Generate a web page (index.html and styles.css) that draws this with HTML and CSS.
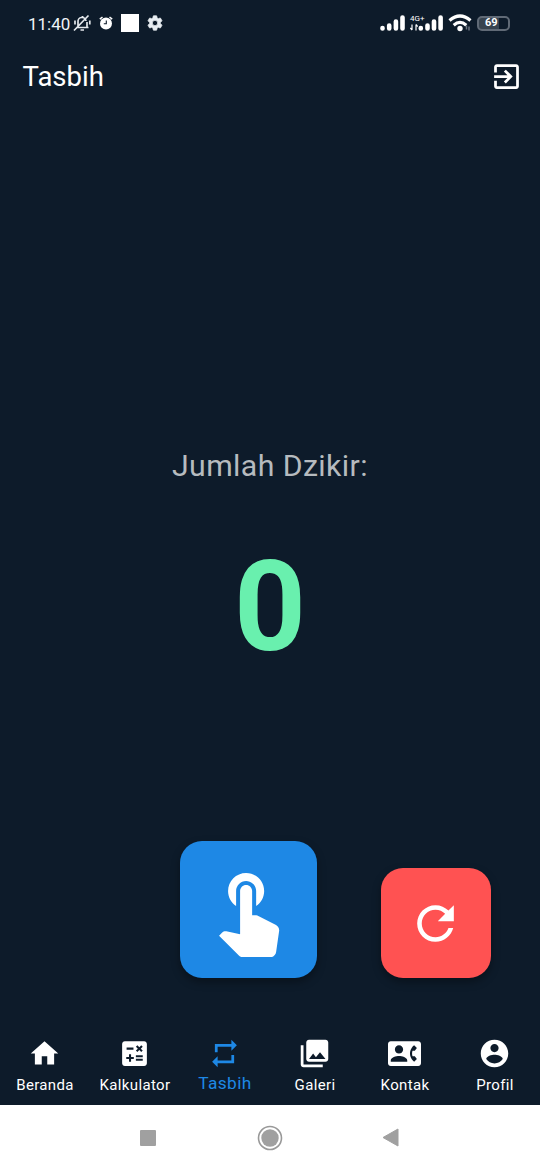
FILE: index.html
```html
<!DOCTYPE html>
<html lang="id">
<head>
<meta charset="utf-8">
<title>Tasbih</title>
<link rel="stylesheet" href="styles.css">
</head>
<body>
<div class="phone">
  <div class="status">
    <span class="clock">11:40</span>
    <svg class="mute" width="18" height="18" viewBox="0 0 18 18" fill="none" stroke="#e4e8ec" stroke-width="1.700"><path d="M3.500 13.500h12M5 13V8a4 4 0 0 1 8-1M14 8v5M7.500 16h3.500M9.500 2v2M1 16.500l14.500-15M2 6.500v4M16.800 6.500v4"/></svg>
    <svg class="alarm" width="14" height="14" viewBox="0 0 14 14"><circle cx="7" cy="7.5" r="6" fill="#fff"/><path d="M.8 3.200 3.500 1M13.200 3.200 10.500 1" stroke="#fff" stroke-width="1.500"/><path d="M7.300 4.500v3.300H4.800" fill="none" stroke="#0d1b2a" stroke-width="1.100"/></svg>
    <span class="block"></span>
    <svg class="gear" width="18" height="18" viewBox="0 0 24 24" fill="#e8edf2" stroke="#e8edf2"><path fill-rule="evenodd" d="M19.14 12.94c.04-.3.06-.61.06-.94 0-.32-.02-.64-.07-.94l2.03-1.58c.18-.14.23-.41.12-.61l-1.92-3.32c-.12-.22-.37-.29-.59-.22l-2.39.96c-.5-.38-1.03-.7-1.62-.94l-.36-2.54c-.04-.24-.24-.41-.48-.41h-3.84c-.24 0-.43.17-.47.41l-.36 2.54c-.59.24-1.13.57-1.62.94l-2.39-.96c-.22-.08-.47 0-.59.22L2.74 8.87c-.12.21-.08.47.12.61l2.03 1.58c-.05.3-.09.63-.09.94s.02.64.07.94l-2.03 1.58c-.18.14-.23.41-.12.61l1.92 3.32c.12.22.37.29.59.22l2.39-.96c.5.38 1.03.7 1.62.94l.36 2.54c.05.24.24.41.48.41h3.84c.24 0 .44-.17.47-.41l.36-2.54c.59-.24 1.13-.56 1.62-.94l2.39.96c.22.08.47 0 .59-.22l1.92-3.32c.12-.22.07-.47-.12-.61l-2.01-1.58zM12 15.6A3.6 3.6 0 1 1 12 8.4a3.6 3.6 0 0 1 0 7.200z"/></svg>
    <span class="spacer"></span>
    <svg class="signal" width="25" height="16" viewBox="0 0 25 16" stroke="#fff" stroke-width="4.600" stroke-linecap="round"><path d="M2.500 13v.4M9.200 10.500v3M15.900 6.500v7M22.500 2.500v11"/></svg>
    <div class="mobile">
      <span class="network">4G+</span>
      <svg class="traffic" width="8" height="7" viewBox="0 0 8 7" fill="none" stroke="#fff" stroke-width="1.200"><path d="M2 .5v5.500M.3 4 2 6M6 6.500v-6M6 .5 7.700 2.500"/></svg>
      <svg class="signal2" width="25" height="16" viewBox="0 0 25 16" stroke="#fff" stroke-width="4.600" stroke-linecap="round"><path d="M2.800 13v.4M9.500 10.500v3M16 6.500v7M22.600 2.500v11"/></svg>
    </div>
    <svg class="wifi" width="24" height="18" viewBox="0 0 24 18" fill="none" stroke="#fff" stroke-width="3.200"><path d="M1.500 6.500q10.500-9 21 0M5.700 11.200q6.300-5.500 12.600 0"/><circle cx="12" cy="14.500" r="2.700" fill="#fff" stroke="none"/><path d="M18.500 15.500v-4M21 12.500v4" stroke="#6c7682" stroke-width="1.500"/></svg>
    <div class="battery"><span class="level">69</span></div>
  </div>

  <header class="appbar">
    <h1 class="title">Tasbih</h1>
    <svg class="icon" viewBox="0 0 24 24"><path d="M10.090 15.590 11.500 17l5-5-5-5-1.410 1.410L12.670 11H3v2h9.670l-2.580 2.590zM19 3H5c-1.110 0-2 .9-2 2v4h2V5h14v14H5v-4H3v4c0 1.100.89 2 2 2h14c1.100 0 2-.9 2-2V5c0-1.100-.9-2-2-2z"/></svg>
  </header>

  <main class="content">
    <p class="caption">Jumlah Dzikir:</p>
    <p class="count">0</p>
  </main>

  <div class="actions">
    <button class="fab fab-tap" aria-label="Hitung"><svg width="96.250" height="96.250" viewBox="0 0 24 24" fill="#fff"><path d="M9 11.240V7.500C9 6.120 10.120 5 11.500 5S14 6.120 14 7.500v3.740c1.210-.81 2-2.180 2-3.740C16 5.010 13.990 3 11.500 3S7 5.010 7 7.500c0 1.560.79 2.930 2 3.740zm9.840 4.630-4.540-2.260c-.17-.07-.35-.11-.54-.11H13v-6c0-.83-.67-1.500-1.500-1.500S10 6.670 10 7.500v10.740l-3.430-.72c-.08-.01-.15-.03-.24-.03-.31 0-.59.13-.79.33l-.79.8 4.940 4.940c.27.27.65.44 1.060.44h6.790c.75 0 1.330-.55 1.440-1.280l.75-5.270c.01-.07.02-.14.02-.2 0-.62-.38-1.160-.91-1.380z"/></svg></button>
    <button class="fab fab-reset" aria-label="Ulang"><svg width="55" height="55" viewBox="0 0 24 24" fill="#fff"><path d="M17.650 6.350C16.200 4.900 14.210 4 12 4c-4.420 0-7.990 3.580-7.990 8s3.570 8 7.990 8c3.730 0 6.840-2.550 7.730-6h-2.080c-.82 2.330-3.040 4-5.650 4-3.310 0-6-2.690-6-6s2.690-6 6-6c1.660 0 3.140.69 4.220 1.780L13 11h7V4l-2.350 2.350z"/></svg></button>
  </div>

  <nav class="tabs">
    <div class="tab"><svg class="icon" viewBox="0 0 24 24"><path d="M10 20v-6h4v6h5v-8h3L12 3 2 12h3v8z"/></svg><span>Beranda</span></div>
    <div class="tab"><svg class="icon" viewBox="0 0 24 24"><path d="M19 3H5c-1.100 0-2 .9-2 2v14c0 1.100.9 2 2 2h14c1.100 0 2-.9 2-2V5c0-1.100-.9-2-2-2zm-5.970 4.060L14.090 6l1.410 1.410L16.910 6l1.060 1.060-1.410 1.410 1.410 1.410-1.060 1.060-1.410-1.400-1.410 1.410-1.060-1.060 1.410-1.410-1.410-1.420zm-6.780.66h5v1.500h-5v-1.500zM11.500 16h-2v2H8v-2H6v-1.500h2v-2h1.500v2h2V16zm6.500 1.250h-5v-1.500h5v1.500zm0-2.500h-5v-1.500h5v1.500z"/></svg><span>Kalkulator</span></div>
    <div class="tab active"><svg class="icon" viewBox="0 0 24 24"><path d="M7 7h10v3l4-4-4-4v3H5v6h2V7zm10 10H7v-3l-4 4 4 4v-3h12v-6h-2v4z"/></svg><span>Tasbih</span></div>
    <div class="tab"><svg class="icon" viewBox="0 0 24 24"><path d="M22 16V4c0-1.100-.9-2-2-2H8c-1.100 0-2 .9-2 2v12c0 1.100.9 2 2 2h12c1.100 0 2-.9 2-2zm-11-4 2.030 2.710L16 11l4 5H8l3-4zM2 6v14c0 1.100.9 2 2 2h14v-2H4V6H2z"/></svg><span>Galeri</span></div>
    <div class="tab"><svg class="icon" viewBox="0 0 24 24"><path d="M22 3H2C.9 3 0 3.900 0 5v14c0 1.100.9 2 2 2h20c1.100 0 1.990-.9 1.990-2L24 5c0-1.100-.9-2-2-2zM8 6c1.660 0 3 1.340 3 3s-1.340 3-3 3-3-1.340-3-3 1.340-3 3-3zm6 12H2v-1c0-2 4-3.100 6-3.100s6 1.100 6 3.100v1zm3.850-4h1.640L21 16l-1.990 1.990c-1.310-.98-2.280-2.380-2.730-3.990-.18-.64-.28-1.310-.28-2s.1-1.360.28-2c.45-1.620 1.420-3.010 2.730-3.990L21 8l-1.510 2h-1.640c-.22.63-.35 1.300-.35 2s.13 1.370.35 2z"/></svg><span>Kontak</span></div>
    <div class="tab"><svg class="icon" viewBox="0 0 24 24"><path d="M12 2C6.480 2 2 6.480 2 12s4.480 10 10 10 10-4.480 10-10S17.520 2 12 2zm0 3c1.660 0 3 1.340 3 3s-1.340 3-3 3-3-1.340-3-3 1.340-3 3-3zm0 14.200c-2.500 0-4.710-1.280-6-3.220.03-1.990 4-3.080 6-3.080 1.990 0 5.970 1.090 6 3.080-1.290 1.940-3.500 3.220-6 3.220z"/></svg><span>Profil</span></div>
  </nav>

  <div class="sysnav">
    <span class="recent"></span>
    <svg width="26" height="26" viewBox="0 0 26 26"><circle cx="13" cy="13" r="11.500" fill="none" stroke="#999" stroke-width="1.600"/><circle cx="13" cy="13" r="8.700" fill="#a0a0a0"/></svg>
    <svg width="17" height="19" viewBox="0 0 17 19"><path d="M1 9.500 16 1v17z" fill="#a0a0a0" stroke="#a0a0a0" stroke-linejoin="round"/></svg>
  </div>
</div>
</body>
</html>
```
FILE: styles.css
```css
* { box-sizing: border-box; }
body { margin: 0; background: #0d1b2a; font-family: Roboto, "Noto Sans", sans-serif; }
.phone { width: 540px; height: 1170px; display: flex; flex-direction: column; background: #0d1b2a; color: #fff; overflow: hidden; }

.status { height: 48px; padding: 0 30px 2px 28px; display: flex; align-items: center; flex: none; }
.clock { width: 45px; font-size: 17px; line-height: 20px; padding-top: 2px; color: #f0f4f8; white-space: nowrap; }
.alarm { margin-left: 8px; }
.block { width: 18px; height: 18px; margin-left: 8px; background: #fff; }
.gear { margin-left: 7px; }
.spacer { flex: 1; }
.mobile { display: grid; grid-template-columns: 8px 25px; grid-template-rows: 9px 8px; width: 33px; margin-left: 5px; }
.network { grid-area: 1 / 1; font-size: 8px; line-height: 8px; width: 16px; z-index: 1; }
.traffic { grid-area: 2 / 1; }
.signal2 { grid-area: 1 / 2 / 3 / 3; }
.wifi { margin-left: 5px; }
.battery { width: 33px; height: 15px; margin-left: 5px; border: 2px solid #606a76; border-radius: 5px; background: linear-gradient(90deg, #37434f 69%, #0d1b2a 69%); display: flex; align-items: center; padding-left: 6px; }
.level { font-size: 11px; line-height: 12px; font-weight: 700; }

.appbar { height: 57px; padding: 0 17px 0 22.5px; display: flex; align-items: center; justify-content: space-between; flex: none; }
.title { margin: 0; font-size: 27.5px; line-height: 33px; font-weight: 400; }
.icon { width: 33px; height: 33px; fill: currentColor; display: block; }

.content { height: 735.5px; padding-top: 343px; text-align: center; flex: none; }
.caption { margin: 0; font-size: 30.25px; line-height: 36px; letter-spacing: .4px; color: #b6bbbf; }
.count { margin: 51px 0 0; font-size: 125.5px; line-height: 146px; font-weight: 700; color: #69f0ae; }

.actions { height: 137.5px; padding-right: 49.5px; display: flex; align-items: flex-end; justify-content: flex-end; gap: 63.5px; flex: none; }
.fab { border: 0; padding: 0; border-radius: 22px; display: flex; align-items: center; justify-content: center; box-shadow: 0 4px 8px rgba(0, 0, 0, .35); }
.fab-tap { width: 137.5px; height: 137.5px; background: #1e88e5; }
.fab-reset { width: 110px; height: 110px; background: #ff5252; }

.tabs { height: 127px; padding-top: 59px; display: grid; grid-template-columns: repeat(6, 1fr); flex: none; }
.tab { display: flex; flex-direction: column; align-items: center; font-size: 15px; line-height: 18px; letter-spacing: .35px; white-space: nowrap; gap: 6px; }
.tab .icon { margin-right: .5px; }
.active { color: #1e88e5; font-size: 17.3px; gap: 4px; letter-spacing: .4px; }

.sysnav { height: 65px; background: #fff; display: flex; align-items: center; justify-content: space-between; padding: 0 141px 0 140px; flex: none; }
.recent { width: 16px; height: 16px; border-radius: 1px; background: #a0a0a0; }
.recent + svg { margin-left: 1px; }
```
